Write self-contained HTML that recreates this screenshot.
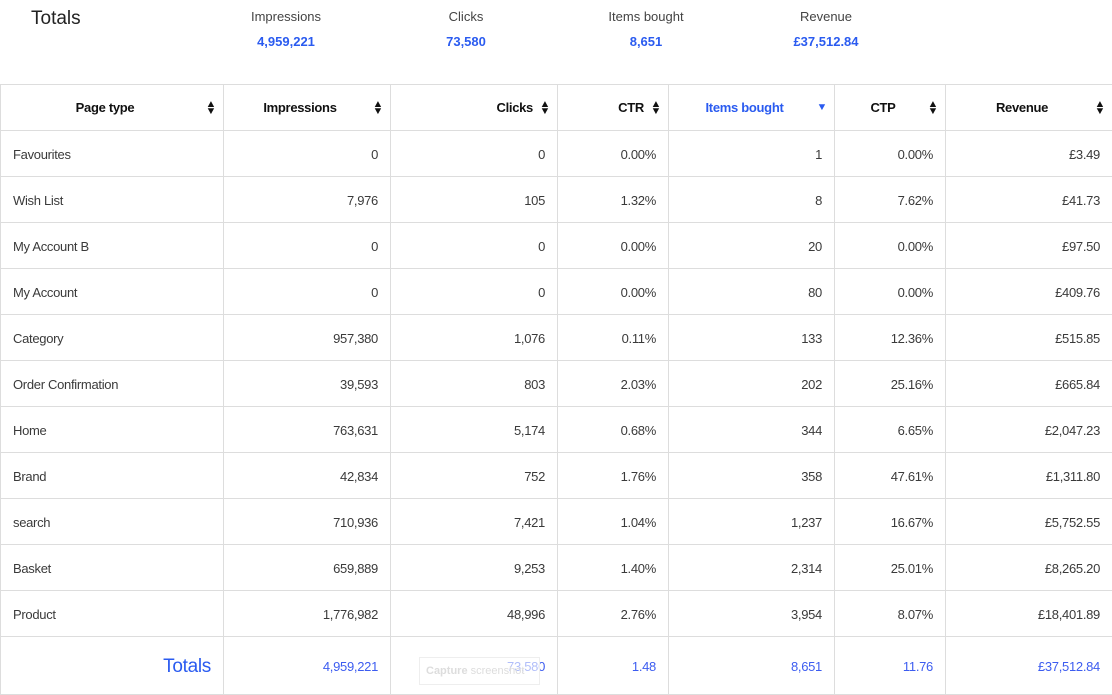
<!DOCTYPE html>
<html><head><meta charset="utf-8"><style>
*{margin:0;padding:0;box-sizing:border-box}
body{width:1112px;height:694px;background:#fff;font-family:"Liberation Sans",sans-serif;color:#333;position:relative;overflow:hidden}
.t{position:absolute;left:31px;top:8px;font-size:19px;color:#222}
.s{position:absolute;top:9px;text-align:center;width:140px;font-size:13px;color:#444}
.s b{display:block;margin-top:10px;color:#2a5bf0;font-size:13px}
table{position:absolute;left:0;top:84px;border-collapse:collapse;table-layout:fixed;width:1112px}
td,th{border:1px solid #ddd;font-size:13px;text-align:right;padding:2px 12px 0;height:46px;color:#3a3a3a;font-weight:normal;letter-spacing:-0.3px}
th{font-weight:bold;color:#111;text-align:center;padding:0 24px 0 10px;position:relative;letter-spacing:-0.3px}
th i{position:absolute;right:7px;top:16px;font-style:normal;font-size:10px;line-height:7px;transform:scaleX(1.1)}
td:first-child{text-align:left}
tr.tot td{height:58px;color:#3c5cf0}
tr.tot td:first-child{text-align:right;font-size:19px;color:#2a5bf0}
.cap{position:absolute;left:419px;top:657px;width:121px;height:28px;border:1px solid #eee;color:#ddd;font-size:11px;padding:7px 6px;background:rgba(255,255,255,.6)}
</style></head><body>
<div class="t">Totals</div>
<div class="s" style="left:216px">Impressions<b>4,959,221</b></div>
<div class="s" style="left:396px">Clicks<b>73,580</b></div>
<div class="s" style="left:576px">Items bought<b>8,651</b></div>
<div class="s" style="left:756px">Revenue<b>£37,512.84</b></div>
<table>
<colgroup><col style="width:223px"><col style="width:167px"><col style="width:167px"><col style="width:111px"><col style="width:166px"><col style="width:111px"><col style="width:167px"></colgroup>
<tr><th>Page type<i>▲<br>▼</i></th><th>Impressions<i>▲<br>▼</i></th><th style="text-align:right">Clicks<i>▲<br>▼</i></th><th style="text-align:right">CTR<i>▲<br>▼</i></th><th style="color:#2a5bf0">Items bought<i style="top:19px">▼</i></th><th>CTP<i>▲<br>▼</i></th><th>Revenue<i>▲<br>▼</i></th></tr>
<tr><td>Favourites</td><td>0</td><td>0</td><td>0.00%</td><td>1</td><td>0.00%</td><td>£3.49</td></tr>
<tr><td>Wish List</td><td>7,976</td><td>105</td><td>1.32%</td><td>8</td><td>7.62%</td><td>£41.73</td></tr>
<tr><td>My Account B</td><td>0</td><td>0</td><td>0.00%</td><td>20</td><td>0.00%</td><td>£97.50</td></tr>
<tr><td>My Account</td><td>0</td><td>0</td><td>0.00%</td><td>80</td><td>0.00%</td><td>£409.76</td></tr>
<tr><td>Category</td><td>957,380</td><td>1,076</td><td>0.11%</td><td>133</td><td>12.36%</td><td>£515.85</td></tr>
<tr><td>Order Confirmation</td><td>39,593</td><td>803</td><td>2.03%</td><td>202</td><td>25.16%</td><td>£665.84</td></tr>
<tr><td>Home</td><td>763,631</td><td>5,174</td><td>0.68%</td><td>344</td><td>6.65%</td><td>£2,047.23</td></tr>
<tr><td>Brand</td><td>42,834</td><td>752</td><td>1.76%</td><td>358</td><td>47.61%</td><td>£1,311.80</td></tr>
<tr><td>search</td><td>710,936</td><td>7,421</td><td>1.04%</td><td>1,237</td><td>16.67%</td><td>£5,752.55</td></tr>
<tr><td>Basket</td><td>659,889</td><td>9,253</td><td>1.40%</td><td>2,314</td><td>25.01%</td><td>£8,265.20</td></tr>
<tr><td>Product</td><td>1,776,982</td><td>48,996</td><td>2.76%</td><td>3,954</td><td>8.07%</td><td>£18,401.89</td></tr>
<tr class="tot"><td>Totals</td><td>4,959,221</td><td>73,580</td><td>1.48</td><td>8,651</td><td>11.76</td><td>£37,512.84</td></tr>
</table>
<div class="cap"><b>Capture</b> screenshot</div>
</body></html>
